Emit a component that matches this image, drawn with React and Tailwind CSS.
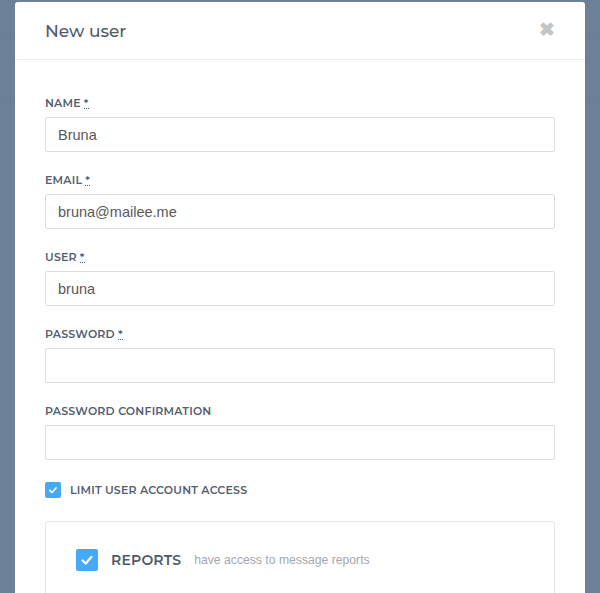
import React from "react";

const head = { fontFamily: "Montserrat, 'Open Sans', 'DejaVu Sans', sans-serif" };
const body = { fontFamily: "'Liberation Sans', Arial, sans-serif" };

function Req() {
  return (
    <span className="ml-[3px] inline-block border-b border-dotted border-[#525f6e] leading-[9px]">*</span>
  );
}

function Field({ label, value, required }) {
  return (
    <div className="mb-[21px]">
      <div className="mb-[6px] text-[11px] font-semibold leading-[15px] tracking-[0.2px] text-[#526070]" style={head}>
        {label}
        {required && <Req />}
      </div>
      <div
        className="flex h-[35px] items-center rounded-[2px] border border-[#dcdcdc] bg-white px-[12px] pt-[2px] text-[14.5px] text-[#595959]"
        style={body}
      >
        {value}
      </div>
    </div>
  );
}

function Check({ size }) {
  return (
    <div
      className={`flex items-center justify-center rounded-[2px] bg-[#46a9f4] ${size === "lg" ? "h-[22px] w-[22px]" : "h-[16px] w-[16px]"}`}
    >
      <svg viewBox="0 0 16 16" className={size === "lg" ? "h-[14px] w-[14px]" : "h-[10px] w-[10px]"}>
        <path d="M3 8.5 L6.5 12 L13 4.5" fill="none" stroke="white" strokeWidth="2.6" strokeLinecap="round" strokeLinejoin="round" />
      </svg>
    </div>
  );
}

export default function App() {
  return (
    <div className="relative h-[593px] w-[600px] overflow-hidden bg-[#6c8197]">
      <div className="flex flex-col">
        <div className="h-[35px] border-b border-[#67809a]" />
        <div className="h-[65px] border-b border-[#67809a]" />
      </div>
      <div className="absolute left-[15px] top-[2px] h-[640px] w-[570px] rounded-[3px] bg-white">
        <div className="flex h-[58px] items-center justify-between border-b border-[#eeeeee] pl-[30px] pr-[30px]">
          <div className="pt-[3px] text-[17px] font-medium text-[#505b6b]" style={head}>New user</div>
          <div className="mb-[2px] text-[19px] font-bold leading-none text-[#c4c4c4]" style={body}>✖</div>
        </div>
        <div className="px-[30px] pt-[36px]">
          <Field label="NAME" value="Bruna" required />
          <Field label="EMAIL" value="bruna@mailee.me" required />
          <Field label="USER" value="bruna" required />
          <Field label="PASSWORD" value="" required />
          <Field label="PASSWORD CONFIRMATION" value="" />
          <div className="mt-[7px] flex items-center gap-[9px]">
            <Check />
            <span className="pt-[1px] text-[11px] font-semibold tracking-[0.2px] text-[#526070]" style={head}>LIMIT USER ACCOUNT ACCESS</span>
          </div>
          <div className="mt-[22px] h-[120px] rounded-[3px] border border-[#e5e5e5] px-[30px] pt-[27px]">
            <div className="flex items-center">
              <Check size="lg" />
              <span className="ml-[13px] pt-[1px] text-[14px] font-semibold tracking-[0.2px] text-[#4f5b6b]" style={head}>REPORTS</span>
              <span className="ml-[13px] pt-[1px] text-[12.2px] text-[#a3a8ae]" style={body}>have access to message reports</span>
            </div>
          </div>
        </div>
      </div>
    </div>
  );
}
